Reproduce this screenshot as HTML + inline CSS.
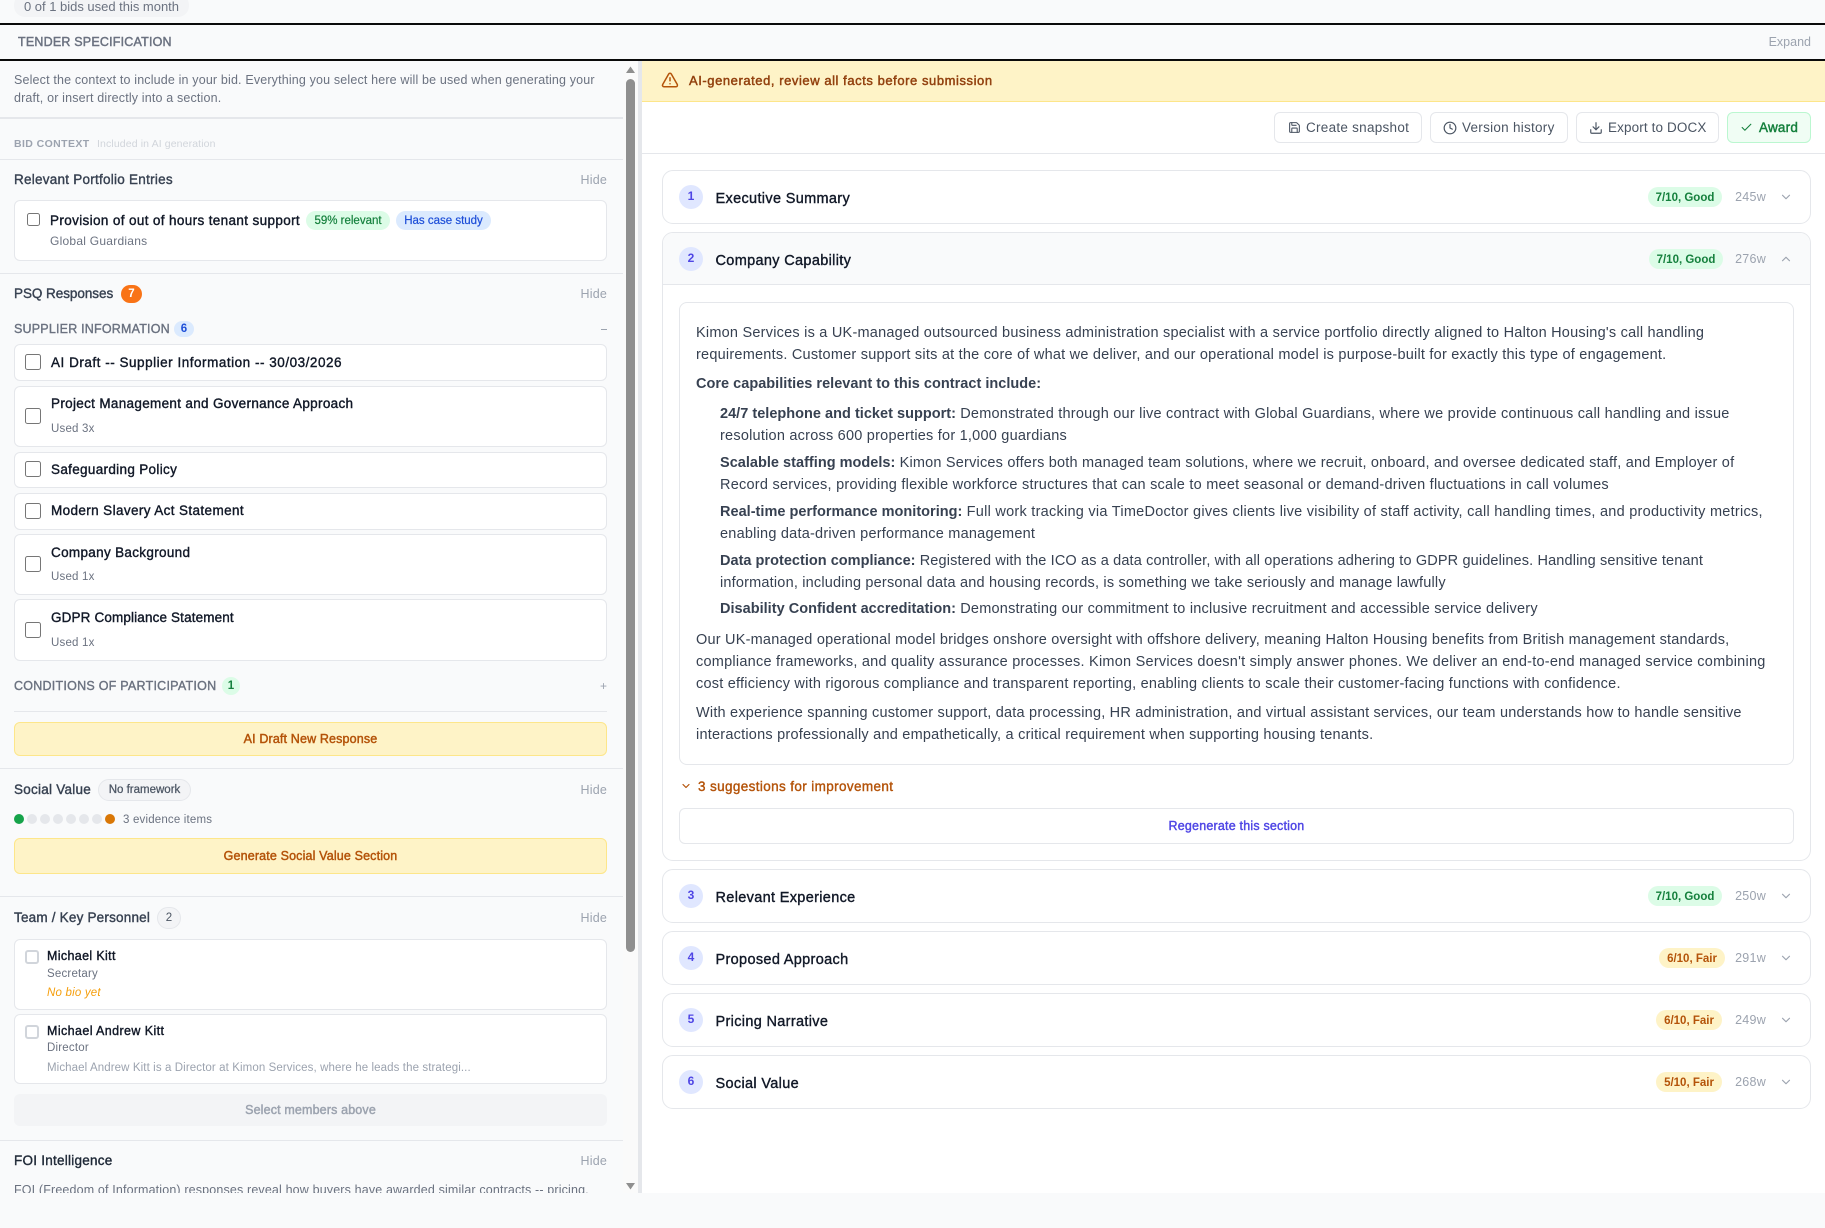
<!DOCTYPE html>
<html lang="en"><head><meta charset="utf-8"><title>Tender Specification</title>
<style>
*{box-sizing:border-box}
html,body{margin:0;padding:0;width:1825px;height:1228px;overflow:hidden;background:#f9fafb}
body{position:relative;font-family:"Liberation Sans",Arial,sans-serif;color:#374151}
.a{position:absolute}
.t{position:absolute;white-space:nowrap;line-height:20px;height:20px}
.m{-webkit-text-stroke:.38px currentColor}
.s{-webkit-text-stroke:.45px currentColor}
.card{position:absolute;left:14px;width:593px;background:#fff;border:1px solid #e5e7eb;border-radius:6px}
.cb{position:absolute;left:25px;width:16px;height:16px;background:#fff;border:1px solid #767676;border-radius:2.5px}
.cb2{position:absolute;left:25px;width:14px;height:14px;background:#fff;border:2px solid #d1d5db;border-radius:3px}
.div{position:absolute;left:0;width:623px;height:1px;background:#e5e7eb}
.hide{position:absolute;right:1218px;white-space:nowrap;line-height:20px;font-size:12.5px;color:#9ca3af;letter-spacing:.2px}
.h{font-size:13.5px;color:#374151;letter-spacing:.25px}
.ci{font-size:13.5px;color:#111827;letter-spacing:.32px}
.sub{font-size:12px;color:#6b7280;letter-spacing:.25px}
.up{font-size:12.5px;color:#6b7280;letter-spacing:.2px}
.pill{position:absolute;border-radius:10px;text-align:center;font-size:11.5px;white-space:nowrap}
.btn{position:absolute;left:14px;width:593px;border-radius:6px;text-align:center;font-size:12.5px;letter-spacing:.15px}
.amber{background:#fef3c7;border:1px solid #fde68a;color:#b45309}
.dot{position:absolute;top:814px;width:10px;height:10px;border-radius:50%;background:#e5e7eb}
.tb{position:absolute;top:112px;height:31px;background:#fff;border:1px solid #e5e7eb;border-radius:6px}
.tb span{position:absolute;top:5px;white-space:nowrap;line-height:20px;font-size:13.5px;color:#4b5563;letter-spacing:.27px}
.tb svg{position:absolute;top:8px}
.sec{position:absolute;left:662px;width:1149px;height:54px;background:#fff;border:1px solid #e5e7eb;border-radius:11px}
.num{position:absolute;left:679px;width:24px;height:24px;border-radius:50%;background:#e0e7ff;color:#4f46e5;font-size:12px;font-weight:700;text-align:center;line-height:23px}
.st{position:absolute;left:715.5px;white-space:nowrap;line-height:20px;font-size:14.5px;color:#111827;letter-spacing:.33px;-webkit-text-stroke:.38px currentColor}
.sp{position:absolute;height:20px;border-radius:10px;font-size:11.5px;line-height:22.5px;text-align:center;font-weight:700;white-space:nowrap}
.g{background:#dcfce7;color:#15803d}
.f{background:#fef3c7;color:#b45309}
.wc{position:absolute;right:59px;white-space:nowrap;line-height:22px;font-size:12.5px;color:#9ca3af;letter-spacing:.25px}
.chev{position:absolute;left:1779px;width:14px;height:14px}
.b{position:absolute;white-space:nowrap;line-height:20px;font-size:14.5px;color:#374151;letter-spacing:.225px}
.b b{font-weight:700;letter-spacing:.02px}
</style></head><body>

<!-- top strip -->
<div class="a" style="left:14px;top:-6px;width:175px;height:23px;background:#f3f4f6;border-radius:11px"></div>
<div class="t" style="left:24px;top:-3px;font-size:13px;color:#6b7280;letter-spacing:-.015px">0 of 1 bids used this month</div>
<div class="a" style="left:0;top:23px;width:1825px;height:2px;background:#0a0a0a"></div>
<div class="t s" style="left:18px;top:32px;font-size:12.5px;color:#6b7280;letter-spacing:.2px">TENDER SPECIFICATION</div>
<div class="t" style="right:14px;top:32px;font-size:12.5px;color:#9ca3af;letter-spacing:0">Expand</div>
<div class="a" style="left:0;top:59px;width:1825px;height:2px;background:#0a0a0a"></div>

<!-- left panel -->
<div id="left" class="a" style="left:0;top:61px;width:642px;height:1132px;overflow:hidden;background:#f9fafb">
<div class="a" style="left:623px;top:0;width:15px;height:1132px;background:#fafafa"></div>
<div class="a" style="left:626px;top:18px;width:9px;height:873px;background:#8f8f8f;border-radius:5px"></div>
<svg class="a" style="left:626px;top:5px" width="9" height="7"><path d="M4.5 0.5L9 7H0z" fill="#8f8f8f"/></svg>
<svg class="a" style="left:626px;top:1122px" width="9" height="7"><path d="M0 0H9L4.5 6.5z" fill="#8f8f8f"/></svg>
<div class="a" style="left:638px;top:0;width:4px;height:1132px;background:#e5e7eb"></div>
</div>

<div class="t" style="left:14px;top:70px;font-size:12.5px;color:#6b7280;letter-spacing:.16px">Select the context to include in your bid. Everything you select here will be used when generating your</div>
<div class="t" style="left:14px;top:88px;font-size:12.5px;color:#6b7280;letter-spacing:.16px">draft, or insert directly into a section.</div>
<div class="div" style="top:117px;height:2px"></div>
<div class="t" style="left:14px;top:134px;font-size:10.5px;font-weight:700;color:#9ca3af;letter-spacing:.4px">BID CONTEXT</div>
<div class="t" style="left:97px;top:134px;font-size:10.5px;color:#d1d5db;letter-spacing:.12px">Included in AI generation</div>
<div class="div" style="top:159px"></div>

<div class="t h m" style="left:14px;top:170px">Relevant Portfolio Entries</div><div class="hide" style="top:170px">Hide</div>
<div class="card" style="top:200px;height:61px"></div>
<div class="a" style="left:27px;top:213px;width:13px;height:13px;background:#fff;border:1px solid #767676;border-radius:2.5px"></div>
<div class="t ci m" style="left:50px;top:211px;letter-spacing:.36px">Provision of out of hours tenant support</div>
<div class="pill g m" style="left:306px;top:211px;width:84px;height:19px;line-height:20px;-webkit-text-stroke-width:.2px">59% relevant</div>
<div class="pill m" style="left:396px;top:211px;width:95px;height:19px;line-height:20px;background:#dbeafe;color:#1d4ed8;-webkit-text-stroke-width:.2px">Has case study</div>
<div class="t sub" style="left:50px;top:231px">Global Guardians</div>
<div class="div" style="top:273px"></div>

<div class="t h m" style="left:14px;top:284px;letter-spacing:-.05px">PSQ Responses</div>
<div class="a" style="left:121px;top:285px;width:21px;height:18px;border-radius:9px;background:#f97316;color:#fff;font-size:11.5px;font-weight:700;text-align:center;line-height:18px">7</div>
<div class="hide" style="top:284px">Hide</div>

<div class="t up m" style="left:14px;top:319px">SUPPLIER INFORMATION</div>
<div class="a" style="left:174px;top:321px;width:20px;height:16px;border-radius:8px;background:#dbeafe;color:#1d4ed8;font-size:11.5px;font-weight:700;text-align:center;line-height:16px">6</div>
<div class="a" style="left:601px;top:329px;width:6px;height:1px;background:#9ca3af"></div>

<div class="card" style="top:344px;height:37px"></div><div class="cb" style="top:354px"></div>
<div class="t ci m" style="left:51px;top:353px;letter-spacing:.52px">AI Draft -- Supplier Information -- 30/03/2026</div>

<div class="card" style="top:386px;height:61px"></div><div class="cb" style="top:408px"></div>
<div class="t ci m" style="left:51px;top:394px">Project Management and Governance Approach</div>
<div class="t" style="left:51px;top:419px;font-size:11.5px;color:#6b7280;letter-spacing:.2px">Used 3x</div>

<div class="card" style="top:452px;height:36px"></div><div class="cb" style="top:461px"></div>
<div class="t ci m" style="left:51px;top:460px">Safeguarding Policy</div>

<div class="card" style="top:493px;height:37px"></div><div class="cb" style="top:503px"></div>
<div class="t ci m" style="left:51px;top:501px;letter-spacing:.38px">Modern Slavery Act Statement</div>

<div class="card" style="top:534px;height:61px"></div><div class="cb" style="top:556px"></div>
<div class="t ci m" style="left:51px;top:543px">Company Background</div>
<div class="t" style="left:51px;top:567px;font-size:11.5px;color:#6b7280;letter-spacing:.2px">Used 1x</div>

<div class="card" style="top:599px;height:62px"></div><div class="cb" style="top:622px"></div>
<div class="t ci m" style="left:51px;top:608px;letter-spacing:.14px">GDPR Compliance Statement</div>
<div class="t" style="left:51px;top:633px;font-size:11.5px;color:#6b7280;letter-spacing:.2px">Used 1x</div>

<div class="t up m" style="left:14px;top:676px;letter-spacing:.25px">CONDITIONS OF PARTICIPATION</div>
<div class="a" style="left:222px;top:677px;width:18px;height:18px;border-radius:9px;background:#dcfce7;color:#15803d;font-size:11.5px;font-weight:700;text-align:center;line-height:18px">1</div>
<div class="t" style="left:600px;top:676px;font-size:12px;color:#9ca3af">+</div>
<div class="a" style="left:14px;top:711px;width:593px;height:1px;background:#e5e7eb"></div>
<div class="btn amber s" style="top:722px;height:34px;line-height:32px">AI Draft New Response</div>
<div class="div" style="top:768px"></div>

<div class="t h m" style="left:14px;top:780px">Social Value</div>
<div class="a" style="left:98px;top:779px;width:93px;height:22px;border-radius:11px;background:#f3f4f6;border:1px solid #e5e7eb;color:#4b5563;font-size:11.5px;text-align:center;line-height:21px;letter-spacing:0;-webkit-text-stroke:.25px currentColor">No framework</div>
<div class="hide" style="top:780px">Hide</div>
<div class="dot" style="left:14px;background:#16a34a"></div><div class="dot" style="left:27px"></div><div class="dot" style="left:40px"></div><div class="dot" style="left:53px"></div><div class="dot" style="left:66px"></div><div class="dot" style="left:79px"></div><div class="dot" style="left:92px"></div><div class="dot" style="left:105px;background:#d97706"></div>
<div class="t" style="left:123px;top:810px;font-size:11.5px;color:#6b7280;letter-spacing:.18px">3 evidence items</div>
<div class="btn amber s" style="top:838px;height:36px;line-height:34px">Generate Social Value Section</div>
<div class="div" style="top:896px"></div>

<div class="t h m" style="left:14px;top:908px;letter-spacing:.2px">Team / Key Personnel</div>
<div class="a" style="left:157px;top:907px;width:24px;height:22px;border-radius:11px;background:#f3f4f6;border:1px solid #e5e7eb;color:#4b5563;font-size:11.5px;text-align:center;line-height:20px">2</div>
<div class="hide" style="top:908px">Hide</div>

<div class="card" style="top:939px;height:71px"></div><div class="cb2" style="top:950px"></div>
<div class="t m" style="left:47px;top:946px;font-size:12.5px;color:#111827;letter-spacing:.35px">Michael Kitt</div>
<div class="t" style="left:47px;top:964px;font-size:11.5px;color:#6b7280;letter-spacing:.2px">Secretary</div>
<div class="t" style="left:47px;top:983px;font-size:11.5px;font-style:italic;color:#f59e0b;letter-spacing:.2px">No bio yet</div>

<div class="card" style="top:1014px;height:70px"></div><div class="cb2" style="top:1025px"></div>
<div class="t m" style="left:47px;top:1021px;font-size:12.5px;color:#111827;letter-spacing:.4px">Michael Andrew Kitt</div>
<div class="t" style="left:47px;top:1038px;font-size:11.5px;color:#6b7280;letter-spacing:.2px">Director</div>
<div class="t" style="left:47px;top:1058px;font-size:11.5px;color:#9ca3af;letter-spacing:.1px">Michael Andrew Kitt is a Director at Kimon Services, where he leads the strategi...</div>

<div class="btn s" style="top:1094px;height:32px;line-height:32px;background:#f3f4f6;color:#9ca3af">Select members above</div>
<div class="div" style="top:1140px"></div>

<div class="t h m" style="left:14px;top:1151px;color:#1f2937">FOI Intelligence</div><div class="hide" style="top:1151px">Hide</div>
<div class="a" style="left:0;top:1170px;width:620px;height:23px;overflow:hidden">
<div class="t" style="left:14px;top:10px;font-size:12.5px;color:#6b7280;letter-spacing:.15px">FOI (Freedom of Information) responses reveal how buyers have awarded similar contracts -- pricing,</div>
</div>

<!-- right panel -->
<div class="a" style="left:642px;top:61px;width:1183px;height:1132px;background:#fff"></div>
<div class="a" style="left:642px;top:61px;width:1183px;height:41px;background:#fef3c7;border-bottom:1px solid #fde68a"></div>
<svg class="a" style="left:661px;top:71px" width="18" height="18" viewBox="0 0 24 24" fill="none" stroke="#b45309" stroke-width="2" stroke-linecap="round" stroke-linejoin="round"><path d="M21.73 18l-8-14a2 2 0 0 0-3.48 0l-8 14A2 2 0 0 0 4 21h16a2 2 0 0 0 1.73-3Z"/><path d="M12 9v4"/><path d="M12 17h.01"/></svg>
<div class="t s" style="left:689px;top:71px;font-size:13px;color:#92400e;letter-spacing:.56px">AI-generated, review all facts before submission</div>
<div class="a" style="left:642px;top:153px;width:1183px;height:1px;background:#e5e7eb"></div>

<div class="tb" style="left:1274px;width:148px">
<svg style="left:13px" width="13" height="13" viewBox="0 0 24 24" fill="none" stroke="#4b5563" stroke-width="2" stroke-linecap="round" stroke-linejoin="round"><path d="M15.2 3a2 2 0 0 1 1.4.6l3.8 3.8a2 2 0 0 1 .6 1.4V19a2 2 0 0 1-2 2H5a2 2 0 0 1-2-2V5a2 2 0 0 1 2-2z"/><path d="M17 21v-7a1 1 0 0 0-1-1H8a1 1 0 0 0-1 1v7"/><path d="M7 3v4a1 1 0 0 0 1 1h7"/></svg>
<span style="left:31px">Create snapshot</span></div>
<div class="tb" style="left:1430px;width:138px">
<svg style="left:12px" width="14" height="14" viewBox="0 0 24 24" fill="none" stroke="#4b5563" stroke-width="2" stroke-linecap="round" stroke-linejoin="round"><circle cx="12" cy="12" r="10"/><path d="M12 6v6l4 2"/></svg>
<span style="left:31px">Version history</span></div>
<div class="tb" style="left:1576px;width:143px">
<svg style="left:12px" width="14" height="14" viewBox="0 0 24 24" fill="none" stroke="#4b5563" stroke-width="2" stroke-linecap="round" stroke-linejoin="round"><path d="M21 15v4a2 2 0 0 1-2 2H5a2 2 0 0 1-2-2v-4"/><path d="M7 10l5 5 5-5"/><path d="M12 15V3"/></svg>
<span style="left:31px;letter-spacing:.12px">Export to DOCX</span></div>
<div class="tb" style="left:1727px;width:84px;background:#f0fdf4;border-color:#bbf7d0">
<svg style="left:12px" width="13" height="13" viewBox="0 0 24 24" fill="none" stroke="#15803d" stroke-width="2" stroke-linecap="round" stroke-linejoin="round"><path d="M20 6L9 17l-5-5"/></svg>
<span class="s" style="left:31px;color:#15803d;letter-spacing:.2px">Award</span></div>

<!-- sections -->
<div class="sec" style="top:170px"></div>
<div class="num" style="top:185px">1</div><div class="st" style="top:189px">Executive Summary</div>
<div class="sp g" style="left:1648px;top:187px;width:74px">7/10, Good</div><div class="wc" style="top:186px">245w</div>
<svg class="chev" style="top:190px" viewBox="0 0 24 24" fill="none" stroke="#9ca3af" stroke-width="2" stroke-linecap="round" stroke-linejoin="round"><path d="M6 9l6 6 6-6"/></svg>

<div class="a" style="left:662px;top:232px;width:1149px;height:629px;background:#fff;border:1px solid #e5e7eb;border-radius:11px"></div>
<div class="a" style="left:663px;top:233px;width:1147px;height:52px;background:#f9fafb;border-bottom:1px solid #e5e7eb;border-radius:10px 10px 0 0"></div>
<div class="num" style="top:247px">2</div><div class="st" style="top:251px">Company Capability</div>
<div class="sp g" style="left:1649px;top:249px;width:74px">7/10, Good</div><div class="wc" style="top:248px">276w</div>
<svg class="chev" style="top:252px" viewBox="0 0 24 24" fill="none" stroke="#9ca3af" stroke-width="2" stroke-linecap="round" stroke-linejoin="round"><path d="M18 15l-6-6-6 6"/></svg>

<div class="a" style="left:679px;top:302px;width:1115px;height:463px;background:#fff;border:1px solid #e5e7eb;border-radius:8px"></div>

<div class="b" style="left:696px;top:323px">Kimon Services is a UK-managed outsourced business administration specialist with a service portfolio directly aligned to Halton Housing's call handling</div>
<div class="b" style="left:696px;top:345px">requirements. Customer support sits at the core of what we deliver, and our operational model is purpose-built for exactly this type of engagement.</div>
<div class="b" style="left:696px;top:374px"><b>Core capabilities relevant to this contract include:</b></div>
<div class="b" style="left:720px;top:404px"><b>24/7 telephone and ticket support:</b> Demonstrated through our live contract with Global Guardians, where we provide continuous call handling and issue</div>
<div class="b" style="left:720px;top:426px">resolution across 600 properties for 1,000 guardians</div>
<div class="b" style="left:720px;top:453px;letter-spacing:.2px"><b>Scalable staffing models:</b> Kimon Services offers both managed team solutions, where we recruit, onboard, and oversee dedicated staff, and Employer of</div>
<div class="b" style="left:720px;top:475px;letter-spacing:.24px">Record services, providing flexible workforce structures that can scale to meet seasonal or demand-driven fluctuations in call volumes</div>
<div class="b" style="left:720px;top:502px;letter-spacing:.26px"><b>Real-time performance monitoring:</b> Full work tracking via TimeDoctor gives clients live visibility of staff activity, call handling times, and productivity metrics,</div>
<div class="b" style="left:720px;top:524px">enabling data-driven performance management</div>
<div class="b" style="left:720px;top:551px;letter-spacing:.14px"><b>Data protection compliance:</b> Registered with the ICO as a data controller, with all operations adhering to GDPR guidelines. Handling sensitive tenant</div>
<div class="b" style="left:720px;top:573px;letter-spacing:.19px">information, including personal data and housing records, is something we take seriously and manage lawfully</div>
<div class="b" style="left:720px;top:599px">
<b>Disability Confident accreditation:</b> Demonstrating our commitment to inclusive recruitment and accessible service delivery</div>
<div class="b" style="left:696px;top:630px;letter-spacing:.21px">Our UK-managed operational model bridges onshore oversight with offshore delivery, meaning Halton Housing benefits from British management standards,</div>
<div class="b" style="left:696px;top:652px;letter-spacing:.24px">compliance frameworks, and quality assurance processes. Kimon Services doesn't simply answer phones. We deliver an end-to-end managed service combining</div>
<div class="b" style="left:696px;top:674px">cost efficiency with rigorous compliance and transparent reporting, enabling clients to scale their customer-facing functions with confidence.</div>
<div class="b" style="left:696px;top:703px;letter-spacing:.205px">With experience spanning customer support, data processing, HR administration, and virtual assistant services, our team understands how to handle sensitive</div>
<div class="b" style="left:696px;top:725px">interactions professionally and empathetically, a critical requirement when supporting housing tenants.</div>

<svg class="a" style="left:680px;top:780px" width="12" height="12" viewBox="0 0 24 24" fill="none" stroke="#b45309" stroke-width="2.4" stroke-linecap="round" stroke-linejoin="round"><path d="M6 9l6 6 6-6"/></svg>
<div class="t m" style="left:698px;top:777px;font-size:13.5px;color:#b45309;letter-spacing:.37px">3 suggestions for improvement</div>
<div class="a" style="left:679px;top:808px;width:1115px;height:36px;background:#fff;border:1px solid #e5e7eb;border-radius:6px;text-align:center;line-height:34px;font-size:12.5px;color:#4f46e5;letter-spacing:.2px;-webkit-text-stroke:.4px #4f46e5">Regenerate this section</div>

<div class="sec" style="top:869px"></div>
<div class="num" style="top:884px">3</div><div class="st" style="top:888px">Relevant Experience</div>
<div class="sp g" style="left:1648px;top:886px;width:74px">7/10, Good</div><div class="wc" style="top:885px">250w</div>
<svg class="chev" style="top:889px" viewBox="0 0 24 24" fill="none" stroke="#9ca3af" stroke-width="2" stroke-linecap="round" stroke-linejoin="round"><path d="M6 9l6 6 6-6"/></svg>

<div class="sec" style="top:931px"></div>
<div class="num" style="top:946px">4</div><div class="st" style="top:950px">Proposed Approach</div>
<div class="sp f" style="left:1659px;top:948px;width:66px">6/10, Fair</div><div class="wc" style="top:947px">291w</div>
<svg class="chev" style="top:951px" viewBox="0 0 24 24" fill="none" stroke="#9ca3af" stroke-width="2" stroke-linecap="round" stroke-linejoin="round"><path d="M6 9l6 6 6-6"/></svg>

<div class="sec" style="top:993px"></div>
<div class="num" style="top:1008px">5</div><div class="st" style="top:1012px">Pricing Narrative</div>
<div class="sp f" style="left:1656px;top:1010px;width:66px">6/10, Fair</div><div class="wc" style="top:1009px">249w</div>
<svg class="chev" style="top:1013px" viewBox="0 0 24 24" fill="none" stroke="#9ca3af" stroke-width="2" stroke-linecap="round" stroke-linejoin="round"><path d="M6 9l6 6 6-6"/></svg>

<div class="sec" style="top:1055px"></div>
<div class="num" style="top:1070px">6</div><div class="st" style="top:1074px">Social Value</div>
<div class="sp f" style="left:1656px;top:1072px;width:66px">5/10, Fair</div><div class="wc" style="top:1071px">268w</div>
<svg class="chev" style="top:1075px" viewBox="0 0 24 24" fill="none" stroke="#9ca3af" stroke-width="2" stroke-linecap="round" stroke-linejoin="round"><path d="M6 9l6 6 6-6"/></svg>

</body></html>
